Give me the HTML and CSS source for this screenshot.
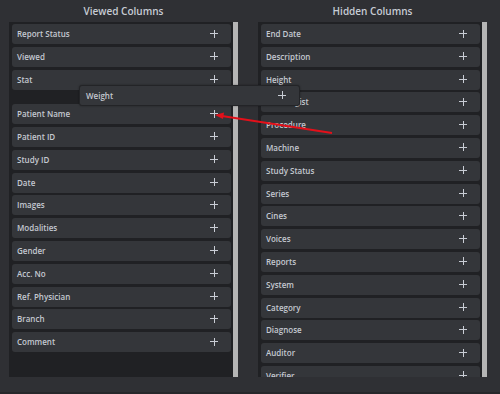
FILE: index.html
```html
<!DOCTYPE html>
<html lang="en">
<head>
  <meta charset="UTF-8" />
  <meta name="viewport" content="width=device-width, initial-scale=1.0"/>
  <title>Columns</title>
  <link rel="stylesheet" href="styles.css">
</head>
<body>
  <div class="page">
    <section class="coluna coluna-esq">
      <h2>Viewed Columns</h2>
      <div class="caixa">
        <div class="lista">
          <div class="item"><span>Report Status</span><i class="mais"></i></div>
          <div class="item"><span>Viewed</span><i class="mais"></i></div>
          <div class="item"><span>Stat</span><i class="mais"></i></div>
          <div class="vaga"></div>
          <div class="item"><span>Patient Name</span><i class="mais"></i></div>
          <div class="item"><span>Patient ID</span><i class="mais"></i></div>
          <div class="item"><span>Study ID</span><i class="mais"></i></div>
          <div class="item"><span>Date</span><i class="mais"></i></div>
          <div class="item"><span>Images</span><i class="mais"></i></div>
          <div class="item"><span>Modalities</span><i class="mais"></i></div>
          <div class="item"><span>Gender</span><i class="mais"></i></div>
          <div class="item"><span>Acc. No</span><i class="mais"></i></div>
          <div class="item"><span>Ref. Physician</span><i class="mais"></i></div>
          <div class="item"><span>Branch</span><i class="mais"></i></div>
          <div class="item"><span>Comment</span><i class="mais"></i></div>
        </div>
        <div class="barra"></div>
      </div>
    </section>

    <section class="coluna coluna-dir">
      <h2>Hidden Columns</h2>
      <div class="caixa">
        <div class="lista">
          <div class="item"><span>End Date</span><i class="mais"></i></div>
          <div class="item"><span>Description</span><i class="mais"></i></div>
          <div class="item"><span>Height</span><i class="mais"></i></div>
          <div class="item"><span>Radiologist</span><i class="mais"></i></div>
          <div class="item"><span>Procedure</span><i class="mais"></i></div>
          <div class="item"><span>Machine</span><i class="mais"></i></div>
          <div class="item"><span>Study Status</span><i class="mais"></i></div>
          <div class="item"><span>Series</span><i class="mais"></i></div>
          <div class="item"><span>Cines</span><i class="mais"></i></div>
          <div class="item"><span>Voices</span><i class="mais"></i></div>
          <div class="item"><span>Reports</span><i class="mais"></i></div>
          <div class="item"><span>System</span><i class="mais"></i></div>
          <div class="item"><span>Category</span><i class="mais"></i></div>
          <div class="item"><span>Diagnose</span><i class="mais"></i></div>
          <div class="item"><span>Auditor</span><i class="mais"></i></div>
          <div class="item"><span>Verifier</span><i class="mais"></i></div>
        </div>
        <div class="barra"></div>
      </div>
    </section>

    <!-- item sendo arrastado -->
    <div class="item arrastando"><span>Weight</span><i class="mais"></i></div>

    <svg class="seta" width="500" height="394" viewBox="0 0 500 394">
      <line x1="332" y1="133" x2="222" y2="116" stroke="#e3101a" stroke-width="1.8"/>
      <polygon points="215,115 224,112.5 223,119" fill="#e3101a"/>
    </svg>
  </div>
</body>
</html>
```

FILE: styles.css
```css
body {
  font-family: 'Open Sans', 'Liberation Sans', sans-serif;
  background-color: #2f3034;
  color: #c4c9d1;
  margin: 0;
  padding: 0;
}

.page {
  position: relative;
  height: 392px;
  border-bottom: 2px solid #26272a;
  display: flex;
  gap: 20px;
  padding-left: 9px;
  overflow: hidden;
}

.coluna {
  width: 229px;
  display: flex;
  flex-direction: column;
}

h2 {
  margin: 0;
  height: 22px;
  line-height: 22px;
  font-size: 10px;
  font-weight: 600;
  text-align: center;
  color: #c7ccd4;
}

.caixa {
  height: 355px;
  background-color: #202124;
  display: flex;
  gap: 2px;
  padding-left: 3px;
}

.lista {
  flex: 1;
  padding-top: 2px;
  overflow: hidden;
}

.barra {
  width: 5px;
  background-color: #b5b5b5;
}

.item {
  height: 20px;
  margin-bottom: 2.8px;
  background-color: #34363a;
  border-radius: 3px;
  display: flex;
  align-items: center;
  justify-content: space-between;
  padding: 0 13px 1px 5px;
  font-size: 8px;
  font-weight: 600;
  box-sizing: border-box;
}

.vaga {
  height: 11.8px;
}

.mais {
  position: relative;
  width: 8px;
  height: 8px;
}

.mais::before,
.mais::after {
  content: "";
  position: absolute;
  background-color: #c9cdd5;
}

.mais::before {
  left: 0;
  top: 3.5px;
  width: 8px;
  height: 1px;
}

.mais::after {
  left: 3.5px;
  top: 0;
  width: 1px;
  height: 8px;
}

.arrastando {
  position: absolute;
  left: 79px;
  top: 85px;
  width: 221px;
  height: 21px;
  margin: 0;
  border: 1px solid #232427;
  padding-left: 6px;
  box-shadow: 0 0 2px rgba(0, 0, 0, 0.4);
}

.seta {
  position: absolute;
  left: 0;
  top: 0;
  pointer-events: none;
}
```
